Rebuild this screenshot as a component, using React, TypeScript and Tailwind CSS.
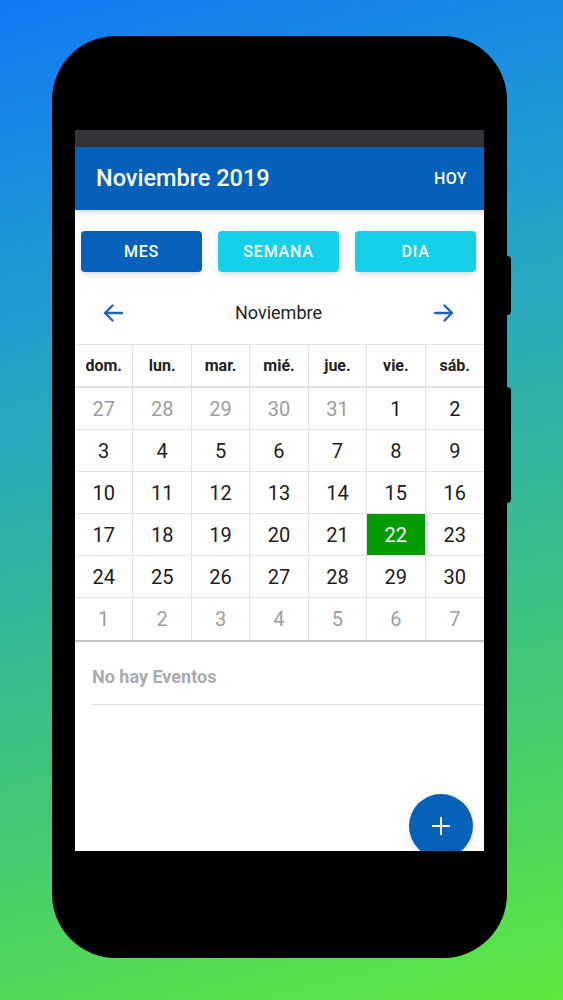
import React from "react";

const weeks: { d: number; muted?: boolean; today?: boolean }[][] = [
  [27, 28, 29, 30, 31].map((d) => ({ d, muted: true })).concat([{ d: 1 }, { d: 2 }]),
  [3, 4, 5, 6, 7, 8, 9].map((d) => ({ d })),
  [10, 11, 12, 13, 14, 15, 16].map((d) => ({ d })),
  [17, 18, 19, 20, 21, 22, 23].map((d) => ({ d, today: d === 22 })),
  [24, 25, 26, 27, 28, 29, 30].map((d) => ({ d })),
  [1, 2, 3, 4, 5, 6, 7].map((d) => ({ d, muted: true })),
];

const days = ["dom.", "lun.", "mar.", "mié.", "jue.", "vie.", "sáb."];

function Arrow({ flip }: { flip?: boolean }) {
  return (
    <svg width="20" height="18" viewBox="0 0 20 18" className={flip ? "rotate-180" : ""}>
      <path d="M19 9H2M9.5 1.5L2 9l7.5 7.5" fill="none" stroke="#1f63b4" strokeWidth="2.4" strokeLinecap="round" strokeLinejoin="round" />
    </svg>
  );
}

function Phone() {
  return (
    <div className="relative ml-[52px] w-[455px] h-[922px] rounded-[64px] bg-black pt-[94px] pl-[23px]">
      <div className="absolute -right-[4px] top-[220px] w-[5px] h-[59px] rounded-r bg-black" />
      <div className="absolute -right-[4px] top-[351px] w-[5px] h-[116px] rounded-r bg-black" />

      <div className="relative w-[409px] h-[721px] bg-white overflow-hidden flex flex-col">
        <div className="h-[17px] bg-[#33333a]" />
        <div className="h-[63px] bg-[#0460b8] flex items-center justify-between pl-[21px] pr-[17px] shadow-md z-10">
          <span className="text-white text-[23.5px] font-medium">Noviembre 2019</span>
          <span className="text-white text-[16px] font-medium tracking-wide">HOY</span>
        </div>

        <div className="grid grid-cols-3 gap-4 pl-[6px] pr-[8px] pt-[21px]">
          <div className="h-[41px] rounded bg-[#0561b9] shadow-md flex items-center justify-center text-white text-[16px] font-medium tracking-wider">MES</div>
          <div className="h-[41px] rounded bg-[#14d0e9] shadow-md flex items-center justify-center text-white text-[16px] font-medium tracking-wider">SEMANA</div>
          <div className="h-[41px] rounded bg-[#14d0e9] shadow-md flex items-center justify-center text-white text-[16px] font-medium tracking-wider">DIA</div>
        </div>

        <div className="h-[72px] pt-[9px] flex items-center justify-between pl-[28px] pr-[30px]">
          <Arrow />
          <span className="text-[18px] text-[#222]">Noviembre</span>
          <Arrow flip />
        </div>

        <div className="grid grid-cols-7 border-t border-[#e2e2e2]">
          {days.map((d) => (
            <div key={d} className="h-[43px] flex items-center justify-center border-r border-b-2 border-[#e2e2e2] last:border-r-0 text-[16px] font-bold text-[#222]">
              {d}
            </div>
          ))}
        </div>
        <div className="grid grid-cols-7 border-b-2 border-[#c4c4c4]">
          {weeks.flat().map((c, i) => (
            <div
              key={i}
              className={
                "h-[42px] flex items-center justify-center text-[20px] border-[#e2e2e2] " +
                ((i + 1) % 7 === 0 ? "" : "border-r ") +
                (i < 35 ? "border-b " : "") +
                (c.today ? "bg-[#029b02] text-white" : c.muted ? "text-[#9e9e9e]" : "text-[#1c1c1c]")
              }
            >
              {c.d}
            </div>
          ))}
        </div>

        <div className="pl-[17px]">
          <div className="h-[63px] flex items-center border-b border-[#dddddd] pt-[6px]">
            <span className="text-[18px] font-bold text-[#ababab]">No hay Eventos</span>
          </div>
        </div>

        <div className="absolute left-[334px] top-[664px] w-[64px] h-[64px] rounded-full bg-[#0662b9] shadow-lg flex items-center justify-center">
          <svg width="20" height="20" viewBox="0 0 20 20">
            <path d="M10 1v18M1 10h18" stroke="white" strokeWidth="2" />
          </svg>
        </div>
      </div>
    </div>
  );
}

export default function App() {
  return (
    <div
      className="w-[563px] h-[1000px] pt-[36px] overflow-hidden bg-[linear-gradient(165deg,#1479f5_0%,#22a0cc_30%,#3fc47c_68%,#5de83e_100%)]"
      style={{ fontFamily: "Roboto, 'Liberation Sans', sans-serif" }}
    >
      <Phone />
    </div>
  );
}
